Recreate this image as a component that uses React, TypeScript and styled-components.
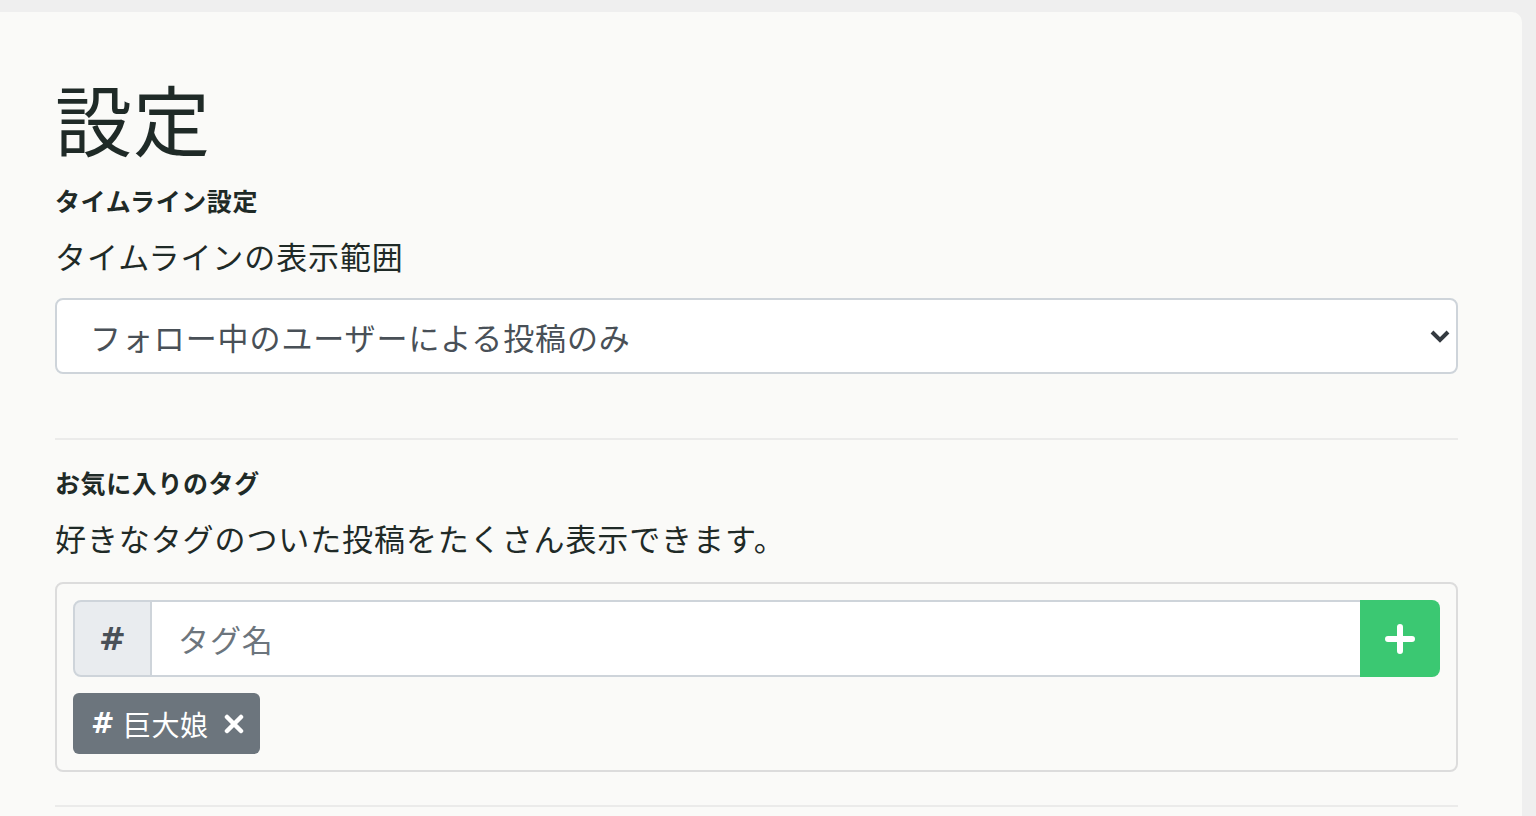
import React, { FC } from "react";
import styled, { createGlobalStyle } from "styled-components";

const GlobalStyle = createGlobalStyle`
  html, body {
    margin: 0;
    padding: 0;
    background: #efefef;
    font-family: "Noto Sans CJK JP", "Noto Sans", sans-serif;
    color: #1f2a27;
  }
`;

const Page = styled.div`
  padding-top: 12px;
  height: 804px;
  overflow: hidden;
`;

const Card = styled.main`
  width: 1522px;
  box-sizing: border-box;
  min-height: 820px;
  background: #fafaf8;
  border-radius: 0 10px 0 0;
  padding: 60px 64px 0 55px;
`;

const Heading = styled.h1`
  margin: 0;
  font-size: 77px;
  line-height: 91px;
  font-weight: 400;
  letter-spacing: 1px;
  color: #1f2a27;
`;

const SectionTitle = styled.h2<{ $top: number }>`
  margin: ${p => p.$top}px 0 0;
  font-size: 25px;
  line-height: 36px;
  font-weight: 700;
  letter-spacing: 0.6px;
  color: #1f2a27;
`;

const Description = styled.p`
  margin: 16px 0 0;
  font-size: 31px;
  line-height: 44px;
  letter-spacing: 0.9px;
  color: #1f2a27;
`;

const SelectWrapper = styled.div`
  position: relative;
  margin-top: 20px;
`;

const Select = styled.select`
  display: block;
  width: 100%;
  height: 76px;
  box-sizing: border-box;
  appearance: none;
  background: #fff;
  border: 2px solid #ced4da;
  border-radius: 8px;
  padding: 0 60px 0 33px;
  font-family: inherit;
  font-size: 31px;
  letter-spacing: 0.9px;
  color: #495057;
  outline: none;
`;

const Chevron = styled.svg`
  position: absolute;
  right: 8px;
  top: 31px;
  width: 20px;
  height: 14px;
  pointer-events: none;
`;

const Divider = styled.hr<{ $top: number }>`
  margin: ${p => p.$top}px 0 0;
  border: none;
  border-top: 2px solid #ebebea;
`;

const TagBox = styled.div`
  margin-top: 22px;
  border: 2px solid #dcdcdc;
  border-radius: 8px;
  padding: 16px;
  display: flex;
  flex-direction: column;
  gap: 16px;
`;

const InputGroup = styled.div`
  display: flex;
  height: 77px;
`;

const Addon = styled.span`
  width: 79px;
  box-sizing: border-box;
  display: flex;
  align-items: center;
  justify-content: center;
  background: #e9ecef;
  border: 2px solid #ced4da;
  border-radius: 8px 0 0 8px;
  font-family: "DejaVu Sans", sans-serif;
  font-size: 32px;
  font-weight: 700;
  color: #495057;
`;

const TagInput = styled.input`
  flex: 1;
  min-width: 0;
  box-sizing: border-box;
  border: 2px solid #ced4da;
  border-left: none;
  border-right: none;
  background: #fff;
  padding: 0 26px;
  font-family: inherit;
  font-size: 31px;
  letter-spacing: 0.9px;
  color: #495057;
  outline: none;

  &::placeholder {
    color: #6c757d;
  }
`;

const AddButton = styled.button`
  width: 80px;
  border: none;
  border-radius: 0 8px 8px 0;
  background: #3bc872;
  display: flex;
  align-items: center;
  justify-content: center;
  cursor: pointer;
`;

const TagList = styled.div`
  display: flex;
  gap: 10px;
`;

const Chip = styled.span`
  height: 61px;
  box-sizing: border-box;
  display: inline-flex;
  align-items: center;
  padding: 0 16px 0 18px;
  background: #6c757d;
  border-radius: 6px;
  color: #fff;
  font-size: 28px;
  letter-spacing: 0.5px;
`;

const ChipHash = styled.span`
  font-family: "DejaVu Sans", sans-serif;
  font-weight: 700;
  font-size: 28px;
  margin-right: 8px;
`;

const ChipRemove = styled.svg`
  margin-left: 16px;
  width: 20px;
  height: 20px;
`;

const tags = ["巨大娘"];

const App: FC = () => {
  return (
    <Page>
      <GlobalStyle />
      <Card>
        <Heading>設定</Heading>

        <SectionTitle $top={19}>タイムライン設定</SectionTitle>
        <Description>タイムラインの表示範囲</Description>
        <SelectWrapper>
          <Select defaultValue="follow">
            <option value="follow">フォロー中のユーザーによる投稿のみ</option>
            <option value="all">すべての投稿</option>
          </Select>
          <Chevron viewBox="0 0 20 14">
            <path
              d="M2 3 L10 11 L18 3"
              fill="none"
              stroke="#343a40"
              strokeWidth="4"
            />
          </Chevron>
        </SelectWrapper>

        <Divider $top={64} />

        <SectionTitle $top={24}>お気に入りのタグ</SectionTitle>
        <Description>好きなタグのついた投稿をたくさん表示できます。</Description>
        <TagBox>
          <InputGroup>
            <Addon>#</Addon>
            <TagInput placeholder="タグ名" />
            <AddButton aria-label="追加">
              <svg width="30" height="30" viewBox="0 0 30 30">
                <path
                  d="M15 3 V27 M3 15 H27"
                  stroke="#fff"
                  strokeWidth="6"
                  strokeLinecap="round"
                />
              </svg>
            </AddButton>
          </InputGroup>
          <TagList>
            {tags.map(tag => (
              <Chip key={tag}>
                <ChipHash>#</ChipHash>
                {tag}
                <ChipRemove viewBox="0 0 20 20">
                  <path
                    d="M3 3 L17 17 M17 3 L3 17"
                    stroke="#fff"
                    strokeWidth="4.5"
                    strokeLinecap="round"
                  />
                </ChipRemove>
              </Chip>
            ))}
          </TagList>
        </TagBox>

        <Divider $top={33} />
      </Card>
    </Page>
  );
};

export default App;
